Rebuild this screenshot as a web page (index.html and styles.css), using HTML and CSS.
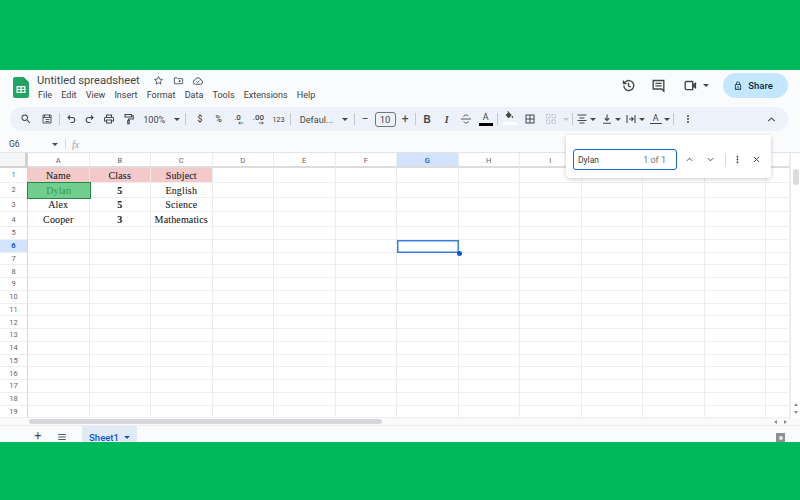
FILE: index.html
```html
<!DOCTYPE html>
<html lang="en">
<head>
<meta charset="utf-8">
<title>Untitled spreadsheet</title>
<link rel="stylesheet" href="styles.css">
</head>
<body>
<div class="band-top"></div>
<main class="app">
  <header class="titlebar">
    <svg class="logo" viewBox="0 0 16 21"><path fill="#23a566" d="M2 0h8.500L16 5.500V19a2 2 0 0 1-2 2H2a2 2 0 0 1-2-2V2a2 2 0 0 1 2-2z"/><path fill="#1e9c5c" d="M10.500 0 16 5.500h-4a1.500 1.500 0 0 1-1.500-1.500z"/><path fill="#fff" d="M3.500 9h9v7h-9zM4.700 10.200v1.700h2.700v-1.700zm3.900 0v1.700h2.700v-1.700zM4.700 13.100v1.700h2.700v-1.700zm3.900 0v1.700h2.700v-1.700z"/></svg>
    <div class="docinfo">
      <div class="docname">
        <span class="doctitle">Untitled spreadsheet</span>
        <svg class="ic ic-star" viewBox="0 0 24 24"><path class="ln" d="m12 3.500 2.600 5.600 6 .7-4.500 4.100 1.300 6L12 16.900l-5.400 3 1.300-6-4.500-4.100 6-.7z"/></svg>
        <svg class="ic ic-move" viewBox="0 0 24 24"><path class="ln" d="M3 6h6l2 2h10v11H3zM12 13.500h5M14.500 11v5"/></svg>
        <svg class="ic ic-cloud" viewBox="0 0 24 24"><path class="ln" d="M7 18.500a4.500 4.500 0 0 1-.8-8.900A6 6 0 0 1 17.700 10a4.300 4.300 0 0 1-.5 8.500zM9 13l2.200 2.200L15 11.500"/></svg>
      </div>
      <nav class="menu"><span>File</span><span>Edit</span><span>View</span><span>Insert</span><span>Format</span><span>Data</span><span>Tools</span><span>Extensions</span><span>Help</span></nav>
    </div>
    <div class="actions">
      <svg class="ic ic-lg" viewBox="0 0 24 24"><path class="ln ln-b" d="M4.500 12a8 8 0 1 0 2.500-5.800L4.500 8.500M4 4v4.800h4.800M12 7.500V12.500l3.500 2"/></svg>
      <svg class="ic ic-lg" viewBox="0 0 24 24"><path class="ln ln-b" d="M3.500 4h17v13.500H20.500V21l-3.500-3.500H3.500zM7 8.500h10M7 12.500h10"/></svg>
      <div class="video">
        <svg class="ic ic-lg" viewBox="0 0 24 24"><path class="ln ln-b" d="M3.500 7.500a2 2 0 0 1 2-2h10v13h-10a2 2 0 0 1-2-2z"/><path class="fillp" d="m15.500 10 5.500-3.500v11L15.500 14z"/></svg>
        <span class="caret"></span>
      </div>
      <button class="share"><svg class="ic ic-lock" viewBox="0 0 24 24"><path class="fillp-d" d="M6 9h1.500V7a4.500 4.500 0 0 1 9 0v2H18a1.500 1.500 0 0 1 1.500 1.500v10A1.500 1.500 0 0 1 18 22H6a1.500 1.500 0 0 1-1.500-1.500v-10A1.500 1.500 0 0 1 6 9zm3.300 0h5.400V7a2.700 2.700 0 0 0-5.400 0zM6.500 11v9h11v-9zM12 13.500a2 2 0 1 1 0 4 2 2 0 0 1 0-4z"/></svg><span>Share</span></button>
    </div>
  </header>

  <div class="toolbar">
    <div class="tgroup g-wide">
      <svg class="ic" viewBox="0 0 24 24"><path class="fillp" d="M15.500 14h-.79l-.28-.27A6.470 6.470 0 0 0 16 9.500 6.500 6.500 0 1 0 9.500 16c1.610 0 3.090-.59 4.230-1.570l.27.28v.79l5 4.990L20.490 19l-4.990-5zm-6 0C7.010 14 5 11.990 5 9.500S7.010 5 9.500 5 14 7.010 14 9.500 11.990 14 9.500 14z"/></svg>
      <svg class="ic" viewBox="0 0 24 24"><path class="ln" d="M4 4h16v16H4zM4 9h16M9 13h8M9 17h8M7 4v5M17 4v5"/></svg>
    </div>
    <i class="sep"></i>
    <div class="tgroup g-hist">
      <svg class="ic" viewBox="0 0 24 24"><path class="ln ln-b" d="M10 5 6 9l4 4M6 9h8.500a5 5 0 0 1 0 10H11"/></svg>
      <svg class="ic" viewBox="0 0 24 24"><path class="ln ln-b" d="m14 5 4 4-4 4M18 9H9.500a5 5 0 0 0 0 10H13"/></svg>
      <svg class="ic" viewBox="0 0 24 24"><path class="fillp" d="M19 8h-1V3H6v5H5c-1.660 0-3 1.340-3 3v6h4v4h12v-4h4v-6c0-1.660-1.340-3-3-3zM8 5h8v3H8V5zm8 12v2H8v-4h8v2zm2-2v-2H6v2H4v-4c0-.55.45-1 1-1h14c.55 0 1 .45 1 1v4h-2z"/></svg>
      <svg class="ic" viewBox="0 0 24 24"><path class="ln ln-b" d="M4 3h13v5H4zM17 5.500h3.500V12H11v3M9.500 15h3v6.500h-3z"/></svg>
      <span class="tt w-zoom">100%</span>
      <span class="caret"></span>
    </div>
    <i class="sep"></i>
    <div class="tgroup g-num">
      <span class="tt w-ic">$</span>
      <span class="tt w-ic">%</span>
      <span class="tt w-ic dec">.0<svg class="mini" viewBox="0 0 8 5"><path class="ln-m" d="M7 2.500H1M3 .8 1 2.500 3 4.200"/></svg></span>
      <span class="tt w-ic dec dec2">.00<svg class="mini" viewBox="0 0 8 5"><path class="ln-m" d="M1 2.500h6M5 .8l2 1.700-2 1.700"/></svg></span>
      <span class="tt w-ic small">123</span>
    </div>
    <i class="sep"></i>
    <div class="tgroup">
      <span class="tt w-font">Defaul...</span>
      <span class="caret"></span>
    </div>
    <i class="sep"></i>
    <div class="tgroup g-tight">
      <span class="tt w-pm">−</span>
      <span class="fontsize">10</span>
      <span class="tt w-pm">+</span>
    </div>
    <i class="sep"></i>
    <div class="tgroup">
      <span class="tt w-ic bold">B</span>
      <span class="tt w-ic ital">I</span>
      <svg class="ic" viewBox="0 0 24 24"><path class="ln" d="M2 12h20M17 6.500C16 4.500 14 4 12 4 9.500 4 7.500 5.200 7.500 7.500M7.500 17c1 2 2.500 3 4.500 3 2.500 0 4.500-1.200 4.500-3.500"/></svg>
      <span class="color-a"><span>A</span><i></i></span>
    </div>
    <i class="sep"></i>
    <div class="tgroup g-fill">
      <span class="fillbtn"><svg class="ic" viewBox="0 0 24 24"><path class="fillp" d="M16.560 8.940 7.620 0 6.210 1.410l2.380 2.380-5.150 5.150c-.59.59-.59 1.540 0 2.120l5.500 5.500c.29.290.68.440 1.060.440s.77-.15 1.060-.44l5.500-5.500c.59-.58.59-1.530 0-2.120zM19 11.500s-2 2.170-2 3.500c0 1.100.9 2 2 2s2-.9 2-2c0-1.330-2-3.500-2-3.500z"/></svg><i></i></span>
      <svg class="ic" viewBox="0 0 24 24"><path class="fillp" d="M3 3v18h18V3H3zm8 16H5v-6h6v6zm0-8H5V5h6v6zm8 8h-6v-6h6v6zm0-8h-6V5h6v6z"/></svg>
      <svg class="ic off" viewBox="0 0 24 24"><path class="ln dash" d="M3 3h7v7H3zM14 3h7v7h-7zM3 14h7v7H3zM14 14h7v7h-7z"/></svg>
      <span class="caret off"></span>
    </div>
    <i class="sep sep-near"></i>
    <div class="tgroup g-pairs">
      <div class="pair"><svg class="ic" viewBox="0 0 24 24"><path class="ln ln-b" d="M3 4h18M7 10h10M3 15h18M7 20h10"/></svg><span class="caret"></span></div>
      <div class="pair"><svg class="ic" viewBox="0 0 24 24"><path class="ln ln-b" d="M12 3v12M7.500 10.500 12 15l4.500-4.500M4 20.500h16"/></svg><span class="caret"></span></div>
      <div class="pair"><svg class="ic" viewBox="0 0 24 24"><path class="ln ln-b" d="M4 4v16M20 4v16M8 12h8M13 8.500l3.500 3.500-3.500 3.500"/></svg><span class="caret"></span></div>
      <div class="pair"><span class="rotate"><span>A</span><i></i></span><span class="caret"></span></div>
    </div>
    <i class="sep sep-near"></i>
    <svg class="ic more" viewBox="0 0 24 24"><path class="fillp" d="M12 8a2 2 0 1 0 0-4 2 2 0 0 0 0 4zm0 2a2 2 0 1 0 0 4 2 2 0 0 0 0-4zm0 6a2 2 0 1 0 0 4 2 2 0 0 0 0-4z"/></svg>
    <svg class="ic collapse" viewBox="0 0 24 24"><path class="ln ln-b" d="m5 15.500 7-7 7 7"/></svg>
  </div>

  <div class="formula">
    <span class="namebox">G6</span>
    <span class="caret"></span>
    <i class="sep sep-fx"></i>
    <span class="fx">fx</span>
  </div>

  <div class="find">
    <div class="find-input"><span class="find-q">Dylan</span><span class="find-n">1 of 1</span></div>
    <svg class="ic ic-chev" viewBox="0 0 24 24"><path class="ln ln-c" d="m5 15.500 7-7 7 7"/></svg>
    <svg class="ic ic-chev" viewBox="0 0 24 24"><path class="ln ln-c" d="m5 8.500 7 7 7-7"/></svg>
    <i class="sep sep-find"></i>
    <svg class="ic ic-dots" viewBox="0 0 24 24"><path class="fillp" d="M12 8a2 2 0 1 0 0-4 2 2 0 0 0 0 4zm0 2a2 2 0 1 0 0 4 2 2 0 0 0 0-4zm0 6a2 2 0 1 0 0 4 2 2 0 0 0 0-4z"/></svg>
    <svg class="ic ic-close" viewBox="0 0 24 24"><path class="ln ln-c" d="m5 5 14 14M19 5 5 19"/></svg>
  </div>

  <div class="sheetwrap">
    <div class="sheet">
      <div class="row head"><div class="corner"></div><div class="c">A</div><div class="c">B</div><div class="c">C</div><div class="c">D</div><div class="c">E</div><div class="c">F</div><div class="c sel">G</div><div class="c">H</div><div class="c">I</div><div class="c">J</div><div class="c">K</div><div class="c">L</div><div class="c"></div></div>
      <div class="row tall"><div class="rh">1</div><div class="c pink">Name</div><div class="c pink">Class</div><div class="c pink">Subject</div><div class="c"></div><div class="c"></div><div class="c"></div><div class="c"></div><div class="c"></div><div class="c"></div><div class="c"></div><div class="c"></div><div class="c"></div><div class="c"></div></div>
      <div class="row tall"><div class="rh">2</div><div class="c found">Dylan</div><div class="c b">5</div><div class="c">English</div><div class="c"></div><div class="c"></div><div class="c"></div><div class="c"></div><div class="c"></div><div class="c"></div><div class="c"></div><div class="c"></div><div class="c"></div><div class="c"></div></div>
      <div class="row tall"><div class="rh">3</div><div class="c">Alex</div><div class="c b">5</div><div class="c">Science</div><div class="c"></div><div class="c"></div><div class="c"></div><div class="c"></div><div class="c"></div><div class="c"></div><div class="c"></div><div class="c"></div><div class="c"></div><div class="c"></div></div>
      <div class="row tall"><div class="rh">4</div><div class="c">Cooper</div><div class="c b">3</div><div class="c">Mathematics</div><div class="c"></div><div class="c"></div><div class="c"></div><div class="c"></div><div class="c"></div><div class="c"></div><div class="c"></div><div class="c"></div><div class="c"></div><div class="c"></div></div>
      <div class="row"><div class="rh">5</div><div class="c"></div><div class="c"></div><div class="c"></div><div class="c"></div><div class="c"></div><div class="c"></div><div class="c"></div><div class="c"></div><div class="c"></div><div class="c"></div><div class="c"></div><div class="c"></div><div class="c"></div></div>
      <div class="row"><div class="rh sel">6</div><div class="c"></div><div class="c"></div><div class="c"></div><div class="c"></div><div class="c"></div><div class="c"></div><div class="c active"></div><div class="c"></div><div class="c"></div><div class="c"></div><div class="c"></div><div class="c"></div><div class="c"></div></div>
      <div class="row"><div class="rh">7</div><div class="c"></div><div class="c"></div><div class="c"></div><div class="c"></div><div class="c"></div><div class="c"></div><div class="c"></div><div class="c"></div><div class="c"></div><div class="c"></div><div class="c"></div><div class="c"></div><div class="c"></div></div>
      <div class="row"><div class="rh">8</div><div class="c"></div><div class="c"></div><div class="c"></div><div class="c"></div><div class="c"></div><div class="c"></div><div class="c"></div><div class="c"></div><div class="c"></div><div class="c"></div><div class="c"></div><div class="c"></div><div class="c"></div></div>
      <div class="row"><div class="rh">9</div><div class="c"></div><div class="c"></div><div class="c"></div><div class="c"></div><div class="c"></div><div class="c"></div><div class="c"></div><div class="c"></div><div class="c"></div><div class="c"></div><div class="c"></div><div class="c"></div><div class="c"></div></div>
      <div class="row"><div class="rh">10</div><div class="c"></div><div class="c"></div><div class="c"></div><div class="c"></div><div class="c"></div><div class="c"></div><div class="c"></div><div class="c"></div><div class="c"></div><div class="c"></div><div class="c"></div><div class="c"></div><div class="c"></div></div>
      <div class="row"><div class="rh">11</div><div class="c"></div><div class="c"></div><div class="c"></div><div class="c"></div><div class="c"></div><div class="c"></div><div class="c"></div><div class="c"></div><div class="c"></div><div class="c"></div><div class="c"></div><div class="c"></div><div class="c"></div></div>
      <div class="row"><div class="rh">12</div><div class="c"></div><div class="c"></div><div class="c"></div><div class="c"></div><div class="c"></div><div class="c"></div><div class="c"></div><div class="c"></div><div class="c"></div><div class="c"></div><div class="c"></div><div class="c"></div><div class="c"></div></div>
      <div class="row"><div class="rh">13</div><div class="c"></div><div class="c"></div><div class="c"></div><div class="c"></div><div class="c"></div><div class="c"></div><div class="c"></div><div class="c"></div><div class="c"></div><div class="c"></div><div class="c"></div><div class="c"></div><div class="c"></div></div>
      <div class="row"><div class="rh">14</div><div class="c"></div><div class="c"></div><div class="c"></div><div class="c"></div><div class="c"></div><div class="c"></div><div class="c"></div><div class="c"></div><div class="c"></div><div class="c"></div><div class="c"></div><div class="c"></div><div class="c"></div></div>
      <div class="row"><div class="rh">15</div><div class="c"></div><div class="c"></div><div class="c"></div><div class="c"></div><div class="c"></div><div class="c"></div><div class="c"></div><div class="c"></div><div class="c"></div><div class="c"></div><div class="c"></div><div class="c"></div><div class="c"></div></div>
      <div class="row"><div class="rh">16</div><div class="c"></div><div class="c"></div><div class="c"></div><div class="c"></div><div class="c"></div><div class="c"></div><div class="c"></div><div class="c"></div><div class="c"></div><div class="c"></div><div class="c"></div><div class="c"></div><div class="c"></div></div>
      <div class="row"><div class="rh">17</div><div class="c"></div><div class="c"></div><div class="c"></div><div class="c"></div><div class="c"></div><div class="c"></div><div class="c"></div><div class="c"></div><div class="c"></div><div class="c"></div><div class="c"></div><div class="c"></div><div class="c"></div></div>
      <div class="row"><div class="rh">18</div><div class="c"></div><div class="c"></div><div class="c"></div><div class="c"></div><div class="c"></div><div class="c"></div><div class="c"></div><div class="c"></div><div class="c"></div><div class="c"></div><div class="c"></div><div class="c"></div><div class="c"></div></div>
      <div class="row"><div class="rh">19</div><div class="c"></div><div class="c"></div><div class="c"></div><div class="c"></div><div class="c"></div><div class="c"></div><div class="c"></div><div class="c"></div><div class="c"></div><div class="c"></div><div class="c"></div><div class="c"></div><div class="c"></div></div>
    </div>
    <div class="vscroll">
      <div class="vthumb"></div>
      <div class="vbtns"><span class="arr arr-up"></span><span class="arr arr-down"></span></div>
    </div>
  </div>

  <div class="hscroll">
    <div class="hthumb"></div>
    <div class="hbtns"><span class="arr arr-left"></span><span class="arr arr-right"></span></div>
  </div>

  <footer class="tabs">
    <span class="tab-add">+</span>
    <svg class="ic ic-all" viewBox="0 0 24 24"><path class="ln ln-b" d="M3 6h18M3 12h18M3 18h18"/></svg>
    <div class="tab"><span>Sheet1</span><span class="caret caret-blue"></span></div>
    <div class="explore"><span></span></div>
  </footer>
</main>
<div class="band-bottom"></div>
</body>
</html>
```
FILE: styles.css
```css
* { box-sizing: border-box; }
html, body { margin: 0; height: 500px; overflow: hidden; }
body { font-family: Roboto, "Open Sans", "Liberation Sans", sans-serif; color: #444746; background: #00b85c; }
.band-top { height: 70px; background: #00b85c; }
.band-bottom { height: 58px; background: #00b85c; }
.app { position: relative; height: 372px; background: #f9fbfd; display: flex; flex-direction: column; overflow: hidden; }

.ic { width: 12px; height: 12px; flex: none; display: block; }
.ln { fill: none; stroke: #444746; stroke-width: 1.8; }
.ln-b { stroke-width: 2.2; }
.ln-c { stroke-width: 2.6; }
.ln-m { fill: none; stroke: #444746; stroke-width: 1; }
.fillp { fill: #444746; }
.fillp-d { fill: #0f2a3d; fill-rule: evenodd; }
.dash { stroke-dasharray: 3 2; stroke: #9aa0a6; }
.off { opacity: .75; }
.caret { width: 0; height: 0; flex: none; border-left: 3px solid transparent; border-right: 3px solid transparent; border-top: 3px solid #444746; }
.caret.off { border-top-color: #b5b8bb; margin-left: -2px; }

/* title bar */
.titlebar { height: 37px; flex: none; display: flex; padding: 3px 12px 0 13px; }
.logo { width: 16px; height: 21px; margin-top: 4px; flex: none; }
.docinfo { margin-left: 8px; display: flex; flex-direction: column; }
.docname { display: flex; align-items: center; height: 15px; }
.doctitle { font-size: 11.200px; color: #444746; width: 116px; white-space: nowrap; }
.ic-star { width: 11px; height: 11px; }
.ic-move { width: 11px; height: 11px; margin-left: 9px; }
.ic-cloud { width: 12px; height: 12px; margin-left: 8px; }
.menu { display: flex; font-size: 9px; margin-top: 2px; margin-left: 1px; color: #3c4043; gap: 9.200px; }
.actions { margin-left: auto; display: flex; align-items: center; height: 25px; }
.ic-lg { width: 15px; height: 15px; }
.actions > .ic-lg { margin-right: 15px; }
.video { display: flex; align-items: center; gap: 5px; margin-left: 2px; margin-right: 14px; }
.share { width: 65px; height: 25px; border: 0; border-radius: 13px; background: #c2e7ff; display: flex; align-items: center; justify-content: center; gap: 5px; font: 500 9.500px Roboto, sans-serif; color: #0f2a3d; padding: 0 5px 0 0; }
.ic-lock { width: 10px; height: 11px; }

/* toolbar */
.toolbar { height: 24px; flex: none; margin: 0 12px 0 10px; padding-left: 10px; background: #edf2fa; border-radius: 12px; display: flex; align-items: center; }
.tgroup { display: flex; align-items: center; gap: 7.500px; }
.g-wide { gap: 9px; }
.g-hist { gap: 7.200px; }
.g-num { gap: 6.800px; margin-left: 2px; }
.g-tight { gap: 4.500px; margin-right: -1px; }
.g-fill { gap: 8.500px; }
.sep { width: 1px; height: 12px; background: #c7c7c7; margin: 0 5.500px; flex: none; }
.sep-near { margin: 0 3px; }
.tt { font-size: 9.500px; color: #444746; text-align: center; white-space: nowrap; flex: none; }
.w-zoom { width: 25px; font-size: 9.200px; }
.w-ic { width: 12px; font-size: 8.500px; font-weight: 500; }
.w-ic.small { font-size: 7.500px; font-weight: 400; }
.w-font { width: 35px; margin-left: 3.500px; text-align: left; font-size: 9.200px; }
.w-pm { width: 10px; font-size: 12px; }
.dec { display: flex; flex-direction: column; align-items: center; line-height: 7px; font-size: 8px; }
.dec2 { margin-left: 2px; margin-right: 1px; }
.mini { width: 6px; height: 4px; display: block; margin-left: 6px; }
.fontsize { width: 21px; height: 15px; border: 1px solid #747775; border-radius: 3px; font-size: 9.500px; display: flex; align-items: center; justify-content: center; }
.bold { font: 700 10px "Liberation Sans", sans-serif; }
.ital { font: italic 700 10px "Liberation Serif", serif; }
.color-a { width: 12px; display: flex; flex-direction: column; align-items: center; font-size: 9px; line-height: 9px; color: #444746; }
.color-a i { width: 14px; height: 3px; background: #000; display: block; margin-top: 1px; }
.fillbtn { width: 12px; display: flex; flex-direction: column; align-items: center; }
.fillbtn .ic { width: 11px; height: 10px; margin-top: -2px; }
.fillbtn i { width: 14px; height: 3px; background: #fff; display: block; margin-top: 1px; }
.g-pairs { gap: 4.500px; }
.pair { display: flex; align-items: center; gap: 2px; }
.rotate { width: 12px; display: flex; flex-direction: column; align-items: center; font-size: 9px; line-height: 9px; }
.rotate i { width: 12px; height: 1px; background: #444746; display: block; }
.more { margin-left: 5px; }
.collapse { margin-left: auto; margin-right: 11px; width: 11px; height: 11px; }

/* formula bar */
.formula { height: 21px; flex: none; display: flex; align-items: center; padding-left: 9px; padding-top: 5px; }
.namebox { font-size: 8.500px; width: 43px; color: #3c4043; }
.sep-fx { margin: 0 0 0 7px; height: 10px; background: #dadce0; }
.fx { font: italic 10px "Liberation Serif", serif; color: #9aa0a6; margin-left: 6px; }

/* find box */
.find { position: absolute; z-index: 5; left: 566px; top: 65px; width: 205px; height: 43px; padding: 15px 0 0 7px; background: #fff; border-radius: 0 0 4px 4px; box-shadow: 0 1px 4px rgba(60, 64, 67, .28); display: flex; align-items: flex-start; }
.find-input { width: 104px; height: 21px; border: 1.500px solid #1a66d8; border-radius: 3px; display: flex; align-items: center; justify-content: space-between; padding: 0 10px 0 4px; font-size: 8.500px; margin-top: -1px; }
.find-q { color: #3c4043; }
.find-n { color: #70757a; font-size: 9px; }
.find .ic-chev { width: 9px; height: 9px; margin-top: 5px; margin-left: 12px; }
.find .ic-chev:first-of-type { margin-left: 8px; }
.sep-find { height: 14px; margin: 3px 0 0 10px; background: #dadce0; }
.find .ic-dots { width: 11px; height: 11px; margin: 4px 0 0 6px; }
.find .ic-close { width: 9px; height: 9px; margin: 5px 0 0 9px; }

/* sheet */
.sheetwrap { height: 266px; flex: none; display: flex; background: #fff; border-top: 1px solid #e4e4e4; overflow: hidden; }
.sheet { width: 790px; flex: none; }
.row { display: grid; grid-template-columns: 28px repeat(12, 61.500px) 24px; height: 12.750px; }
.row.tall { height: 14.750px; }
.row.head { height: 15px; }
.c { border-right: 1px solid #ececec; border-bottom: 1px solid #eeeeee; display: flex; align-items: center; justify-content: center; font: 10px "Liberation Serif", serif; color: #202124; position: relative; white-space: nowrap; letter-spacing: .15px; -webkit-text-stroke: .08px #202124; padding-top: 1px; }
.row.head .c { font: 7.500px Roboto, sans-serif; color: #5f6368; letter-spacing: 0; -webkit-text-stroke: 0; border-bottom: 2px solid #dcdcdc; padding-top: 1px; }
.row.head .c.sel { background: #d3e3fd; color: #0b57d0; font-weight: 500; }
.corner { background: #f4f5f6; border-right: 3px solid #d2d2d2; border-bottom: 2px solid #d2d2d2; }
.rh { font-size: 7.500px; color: #5f6368; display: flex; align-items: center; justify-content: center; background: #fff; border-right: 1px solid #d6d6d6; border-bottom: 1px solid #eeeeee; }
.rh.sel { background: #d3e3fd; color: #0b57d0; font-weight: 700; }
.pink { background: #f4c9c9; }
.b { font-weight: 700; }
.found { background: #71ce8f; color: #2f9957; -webkit-text-stroke: 0; box-shadow: 0 0 0 1px #1d8a45; border: 0; z-index: 2; }
.active { overflow: visible; z-index: 3; box-shadow: inset 0 0 0 1.500px #3b7fe0; border: 0; }
.active::after { content: ""; position: absolute; right: -3px; bottom: -3px; width: 5px; height: 5px; border-radius: 50%; background: #0b57d0; }

.vscroll { width: 10px; flex: none; background: #fff; border-left: 1px solid #eee; display: flex; flex-direction: column; align-items: center; padding-top: 16px; }
.vthumb { width: 6px; height: 16px; background: #dadce0; border-radius: 3px; }
.vbtns { margin-top: auto; display: flex; flex-direction: column; align-items: center; gap: 5px; margin-bottom: 4px; width: 100%; }
.arr { width: 0; height: 0; display: block; }
.arr-up { border-left: 2px solid transparent; border-right: 2px solid transparent; border-bottom: 3px solid #8a8d90; }
.arr-down { border-left: 2px solid transparent; border-right: 2px solid transparent; border-top: 3px solid #8a8d90; }
.arr-left { border-top: 2px solid transparent; border-bottom: 2px solid transparent; border-right: 3px solid #8a8d90; }
.arr-right { border-top: 2px solid transparent; border-bottom: 2px solid transparent; border-left: 3px solid #8a8d90; }

.hscroll { height: 8px; flex: none; background: #fafafa; display: flex; align-items: center; padding-left: 29px; border-bottom: 1px solid #ececec; }
.hthumb { width: 353px; height: 5px; background: #d5d7da; border-radius: 3px; }
.hbtns { margin-left: auto; margin-right: 13px; display: flex; gap: 7px; }

/* sheet tabs */
.tabs { height: 16px; flex: none; display: flex; align-items: center; padding-left: 33px; position: relative; }
.tab-add { width: 10px; font-size: 12px; text-align: center; line-height: 12px; color: #444746; align-self: flex-end; }
.ic-all { width: 10px; height: 10px; margin-left: 14px; margin-top: 6px; }
.tab { margin-left: 15px; width: 55px; height: 16px; background: #e1e9f7; display: flex; align-items: center; justify-content: center; gap: 5px; color: #0b57d0; font-size: 9.500px; font-weight: 500; padding-top: 6px; overflow: hidden; }
.caret-blue { border-top-color: #0b57d0; }
.explore { margin-left: auto; margin-right: 15px; width: 9px; height: 9px; background: #8d9094; margin-top: 7px; display: flex; align-items: center; justify-content: center; }
.explore span { width: 4px; height: 4px; background: #e6e7e8; border-radius: 50%; }
```
